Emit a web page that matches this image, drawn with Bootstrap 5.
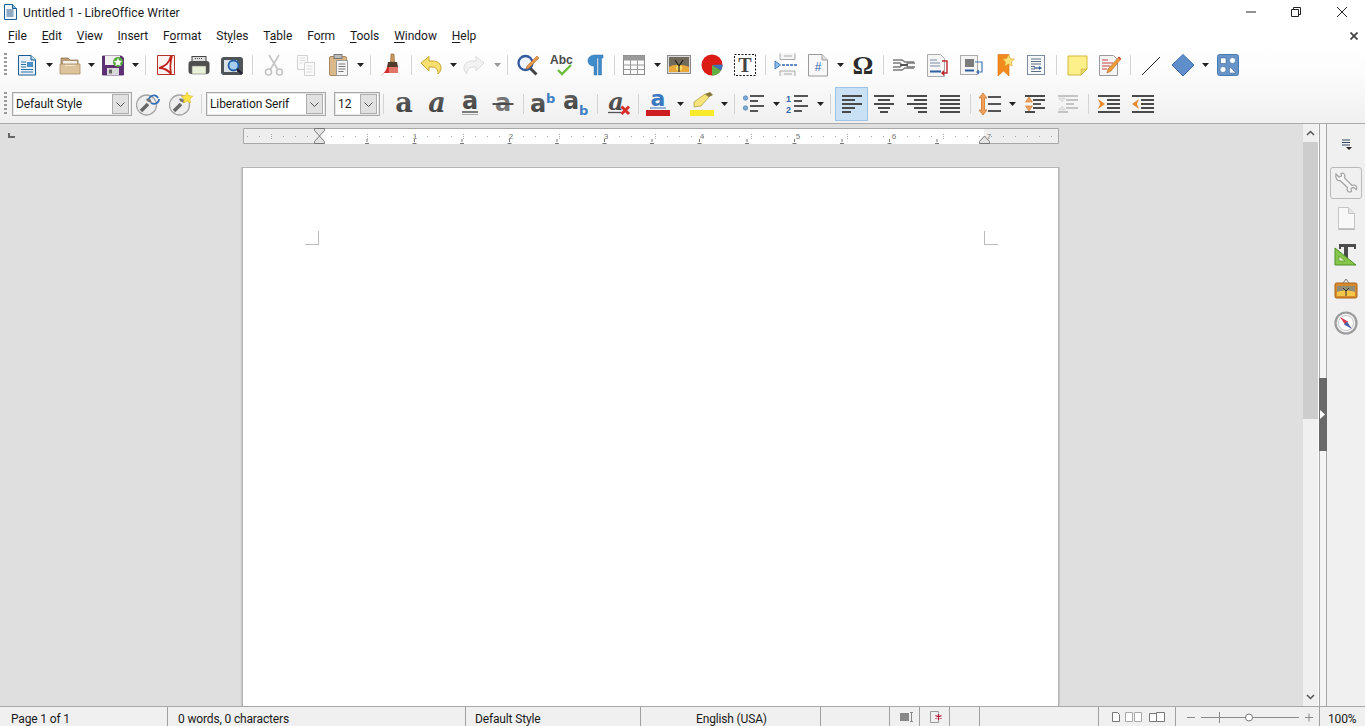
<!DOCTYPE html>
<html lang="en"><head><meta charset="utf-8"><title>Untitled 1 - LibreOffice Writer</title>
<link rel="stylesheet" href="https://cdn.jsdelivr.net/npm/bootstrap@5.3.0/dist/css/bootstrap.min.css">
<style>
html,body{height:726px;overflow:hidden}
body{font:12px/16px Roboto,"Noto Sans",sans-serif;color:#1a1a1a;background:#fff}
.lo-app{height:726px}
.lo-title{height:24px;font-size:12px;padding-left:3px}
.lo-title span{letter-spacing:.1px;padding-top:1px}
.lo-title svg.doc{width:15px;height:16px;margin-right:5px}
.lo-win{width:45px;height:24px}
.lo-win svg{width:12px;height:12px}
.lo-win3{width:47px}
.lo-menu{height:22px;padding:1px 7px 0 8px}
.lo-menu span u{text-underline-offset:2px}
.lo-menu .mi{margin-right:14.8px}
.lo-bars{background:linear-gradient(#fff,#fbfbfb 40%,#f0f0f0);border-bottom:1px solid #ababab;height:78px}
.lo-tb1{height:39px;padding:0 0 1px 4px}
.lo-tb2{height:38px;padding-left:4px}
.lo-grip{width:3px;height:24px;background:repeating-linear-gradient(#9a9a9a 0 2px,transparent 2px 4px)}
.ic{width:24px;height:24px;flex:none;display:block}
.ar{width:7px;height:4px;flex:none;display:block}
.sp{width:1px;height:20px;background:#d4d4d4;flex:none}
.cmb{height:24px;background:#fff;border:1px solid #a8a8a8;padding:1px 2px 1px 3px;flex:none;outline:1px solid #e6e6e6;outline-offset:-2px;letter-spacing:-.1px}
.cmb-s{width:120px}.cmb-f{width:120px}.cmb-n{width:46px}
.cmb b{width:17px;height:20px;background:#e1e1e1;border:1px solid #adadad;font-weight:400}
.cmb b svg{width:9px;height:5px}
.on{width:33px;height:34px;background:#c9e0f5;border:1px solid #9cc4e6;flex:none}
.gp2{margin-left:2px}.gp3{margin-left:3px}.gp4{margin-left:4px}.gp5{margin-left:5px}.gp6{margin-left:6px}.gp7{margin-left:7px}.gp8{margin-left:8px}.gp9{margin-left:9px}.gp10{margin-left:10px}
.lo-work{flex:1 1 0;min-height:0}
.lo-doc{background:#dfdfdf;padding:4px 0 0 243px;position:relative;overflow:hidden}
.lo-tabk{position:absolute;left:8px;top:9px;width:7px;height:5px;border-left:2px solid #666;border-bottom:2px solid #666}
.lo-ruler{width:816px;height:16px;display:block}
.lo-ruler text{font:8px "Liberation Sans",sans-serif;fill:#777}
.lo-page{width:817px;height:600px;margin:23px 0 0 -1px;background:#fff;border:1px solid #b4b4b4;box-shadow:-1px 0 1px #c8c8c8,1px 0 1px #c8c8c8,0 -1px 0 #efefef;position:relative}
.lo-crn{position:absolute;top:63px;width:14px;height:14px;border-bottom:1px solid #bbb}
.lo-crn-l{left:62px;border-right:1px solid #bbb}
.lo-crn-r{left:741px;border-left:1px solid #bbb}
.lo-scroll{width:16px;background:#f0f0f0;border-right:1px solid #fff}
.lo-scroll .btn-a{height:18px}
.lo-scroll svg{width:9px;height:6px}
.lo-thumb{height:277px;background:#cdcdcd}
.lo-split{width:8px;background:#f4f4f4;border-left:1px solid #a6a6a6;border-right:1px solid #a6a6a6;padding-top:254px}
.lo-split div{height:73px;background:#696969;margin:0 -1px}
.lo-split svg{width:5px;height:9px;margin-left:1px}
.lo-side{width:38px;background:#f0f0f0;padding-top:14px}
.lo-side .s1{width:12px;height:12px;margin-bottom:17px}
.lo-set{width:32px;height:32px;border:1px solid #b9b9b9;border-radius:3px;margin-bottom:7px;margin-left:-1px}
.sb13{margin-bottom:13px}.sb9{margin-bottom:9px}.sb11{margin-bottom:11px}
.lo-status{height:20px;background:#f0f0f0;border-top:1px solid #a8a8a8;font-size:12px;letter-spacing:-.15px}
.lo-status>div{height:19px;border-right:1px solid #a0a0a0;flex:none;padding-top:4px}
.st1{width:168px;padding-left:11px}.st2{width:298px;padding-left:10px}.st3{width:175px;padding-left:9px}.st4{width:180px;padding-left:55px}
.st5{width:69px}.st6{width:30px;padding-left:3px}.st7{width:30px;padding-left:3px}.st7b{width:30px}.st8{width:119px}.st9{width:77px}.st10{width:144px}.st11{padding-left:8px;border:0!important}
.lo-status svg{display:block}
.lo-vw{padding-top:0!important;padding-left:13px}
.lo-vw svg{height:12px;width:54px;margin-top:4px}
.lo-zm{padding-top:2px!important}
.lo-zm svg{width:144px;height:17px}
</style></head><body>
<svg width="0" height="0" class="position-absolute" aria-hidden="true"><defs>
<linearGradient id="gy" x1="0" y1="0" x2="0" y2="1"><stop offset="0" stop-color="#6a6a6a"/><stop offset="1" stop-color="#3c3c3c"/></linearGradient>
<symbol id="new" viewBox="0 0 24 24"><path d="M3.500 2.500H16l4.500 4.500v15h-17z" fill="#e8f1f9" stroke="#1c5d92"/><path d="M16 2.500V7h4.500" fill="#bcd6ea" stroke="#1c5d92"/><path d="M6 9h5M6 11.500h5M6 14h5M6 16.500h12M6 19h12" stroke="#2a74ad" stroke-width="1.200"/><rect x="12" y="9" width="6" height="5" fill="#4b8fc4"/></symbol>
<symbol id="open" viewBox="0 0 24 24"><path d="M3 5h7l2 2h8v4H3z" fill="#b89d77" stroke="#8f7755" stroke-width=".8"/><rect x="5" y="8" width="14" height="4" fill="#f4f0e6"/><path d="M2 11h20v10H2z" fill="#dcc39b" stroke="#a88e67" stroke-width=".8"/><path d="M7 12.500h10" stroke="#f1e3c9"/></symbol>
<symbol id="save" viewBox="0 0 24 24"><path d="M1.500 3h19l2 2v17h-21z" fill="#5f2f76" stroke="#46225a" stroke-width=".8"/><rect x="4" y="3" width="15" height="9" fill="#f1f1f1"/><rect x="6" y="15" width="12" height="7" fill="#d8d8d8"/><rect x="8" y="16.500" width="3" height="4" fill="#666"/><circle cx="17" cy="9" r="5" fill="#5aa840"/><path d="m17 5 1.200 2.700 3 .3-2.200 2 .6 2.900-2.600-1.500-2.600 1.500.6-2.900-2.200-2 3-.3z" fill="#fff"/></symbol>
<symbol id="pdf" viewBox="0 0 24 24"><path d="M3.500 2.500h17v19h-17z" fill="#f9f3f1" stroke="#b4332c"/><path d="M17 3C15 10 12 13 5 15c5 0 9 2 12 6-1-6-1-12 1-18" fill="#fff" stroke="#c4231c" stroke-width="1.800"/></symbol>
<symbol id="print" viewBox="0 0 24 24"><rect x="5" y="3.500" width="14" height="5" fill="#dedede" stroke="#444"/><path d="M1.500 11c0-2 1-3 3-3h15c2 0 3 1 3 3v7c0 2-1 3-3 3h-15c-2 0-3-1-3-3z" fill="#4e4e4e"/><rect x="5" y="13" width="14" height="8" fill="#e8f0d8" stroke="#777" stroke-width=".6"/><path d="M8 5.500h1m1 0h1m1 0h1m1 0h1" stroke="#555"/></symbol>
<symbol id="prev" viewBox="0 0 24 24"><path d="M1 7c0-2 1-3 3-3h16c2 0 3 1 3 3v12c0 2-1 3-3 3H4c-2 0-3-1-3-3z" fill="#4f5458"/><rect x="4" y="7" width="13" height="12" fill="#dce3e8"/><circle cx="13.500" cy="12.500" r="5" fill="#a5cdf0" stroke="#2660a4" stroke-width="1.800"/><path d="m17 16 5 5" stroke="#223" stroke-width="2.400"/></symbol>
<symbol id="cut" viewBox="0 0 24 24"><g fill="none" stroke="#c4c4c4" stroke-width="1.600"><path d="M7 2l9 15M17 2 8 17"/><circle cx="6.500" cy="19" r="3"/><circle cx="17.500" cy="19" r="3"/></g></symbol>
<symbol id="copy" viewBox="0 0 24 24"><g fill="#fbfbfb" stroke="#d2d2d2"><path d="M3.500 2.500h10v14h-10z"/><path d="M10.500 9.500h10v13h-10z"/></g><path d="M5.500 5h6M5.500 7.500h6M5.500 10h3M12.500 13h6M12.500 16h6M12.500 19h6" stroke="#dadada"/></symbol>
<symbol id="paste" viewBox="0 0 24 24"><rect x="2.500" y="3.500" width="17" height="19" rx="1.500" fill="#dcb98a" stroke="#a9855b"/><rect x="7" y="1.500" width="8" height="4" fill="#bcbcbc" stroke="#777"/><path d="M9.500 7.500h11v15h-11z" fill="#f6f6f6" stroke="#999"/><path d="M11.500 11h7M11.500 13.500h7M11.500 16h7M11.500 18.500h5" stroke="#777"/></symbol>
<symbol id="clone" viewBox="0 0 24 24"><path d="M11 1h3l.5 8h-4z" fill="#c9985d" stroke="#8a6436" stroke-width=".6"/><path d="M8 9h9l1 5H7z" fill="#4f3a2b"/><path d="M7 14h11v6H4l-3 3c2-3 5-4 6-9z" fill="#d62f2b"/><path d="M9 14h9v6H9z" fill="#f0e2c6" fill-opacity=".4"/></symbol>
<symbol id="undo" viewBox="0 0 24 24"><path d="M2 10 10 3.500V8h4c5 0 8 3 8 7 0 2-1 4-3 6 .5-4-2-7-6-7h-3v4z" fill="#f8df70" stroke="#c9a62a"/></symbol>
<symbol id="redo" viewBox="0 0 24 24"><path d="M22 10 14 3.500V8h-4c-5 0-8 3-8 7 0 2 1 4 3 6-.5-4 2-7 6-7h3v4z" fill="#f2f2f2" stroke="#dcdcdc"/></symbol>
<symbol id="find" viewBox="0 0 24 24"><circle cx="9.500" cy="10" r="7" fill="#eef4fb" stroke="#33599e" stroke-width="2.300"/><path d="m14.500 15.500 6 6" stroke="#444" stroke-width="3"/><path d="M21 3l2 2-10 10-3 1 1-3z" fill="#e9974a" stroke="#a9682c" stroke-width=".6"/></symbol>
<symbol id="spell" viewBox="0 0 24 24"><text x="0" y="11" font-family="Liberation Sans" font-weight="700" font-size="12" fill="#4a4a4a">Abc</text><path d="m8 17 4 4 9-9" fill="none" stroke="#6abf3a" stroke-width="2.400"/></symbol>
<symbol id="pil" viewBox="0 0 24 24"><path d="M13 2h7v3h-1.500v17h-3V5H14v17h-3V13c-4 0-6-2-6-5.500S8 2 13 2z" fill="#3f8ccb" stroke="#2d6fa8" stroke-width=".5"/></symbol>
<symbol id="table" viewBox="0 0 24 24"><rect x="1.500" y="2.500" width="21" height="19" fill="#fbfbfb" stroke="#8a8a8a"/><rect x="1.500" y="2.500" width="21" height="5" fill="#9a9a9a"/><path d="M1.500 12h21M1.500 16.500h21M8.500 2.500v19M15.500 2.500v19" stroke="#9a9a9a"/></symbol>
<symbol id="img" viewBox="0 0 24 24"><rect x=".5" y="2.500" width="23" height="18" fill="#d9d9d9" stroke="#8a8a8a"/><rect x="2" y="4" width="20" height="15" fill="#6f6a5c"/><path d="M2 14c4-3 14-3 20 0v5H2z" fill="#e8a93a"/><circle cx="12" cy="15" r="3" fill="#f8dc6a"/><path d="M12 19v-6L8 7m4 6 4-6" stroke="#2b2012" stroke-width="1.200" fill="none"/></symbol>
<symbol id="chart" viewBox="0 0 24 24"><circle cx="12" cy="12" r="10.500" fill="#dc1c14"/><path d="M12 12 21 17.500a10.500 10.500 0 0 1-9 5z" fill="#62b043"/><path d="M12 12 22.500 11.500a10.500 10.500 0 0 1-1.500 6z" fill="#3e73ba"/></symbol>
<symbol id="tbox" viewBox="0 0 24 24"><rect x="1.500" y="1.500" width="21" height="21" fill="#fff" stroke="#111" stroke-dasharray="2 1.500"/><text x="12" y="18.500" text-anchor="middle" font-family="Liberation Serif" font-weight="700" font-size="20" fill="#444">T</text></symbol>
<symbol id="brk" viewBox="0 0 24 24"><path d="M6 .5v6h15v-6" fill="#f4f4f4" stroke="#aaa"/><path d="M6 23v-5h15v5" fill="#f4f4f4" stroke="#aaa"/><path d="M10 3h8M10 21h8" stroke="#aaa"/><path d="M8 12h15" stroke="#2f66ad" stroke-width="1.600" stroke-dasharray="3 1"/><path d="M1 8l5.500 4L1 16z" fill="#8cc0ec" stroke="#2f66ad" stroke-width=".8"/></symbol>
<symbol id="fld" viewBox="0 0 24 24"><path d="M2.500 1.500H16L21.500 7v16h-19z" fill="#f8f8f8" stroke="#9a9a9a"/><path d="M16 1.500V7h5.500" fill="#e2e2e2" stroke="#9a9a9a"/><text x="12" y="18" text-anchor="middle" font-family="Liberation Sans" font-size="12" fill="#2f66ad">#</text></symbol>
<symbol id="omg" viewBox="0 0 24 24"><text x="12" y="21" text-anchor="middle" font-family="Liberation Serif" font-weight="700" font-size="26" fill="#2b2b2b">Ω</text></symbol>
<symbol id="lnk" viewBox="0 0 24 24"><g fill="none" stroke="#7a7a7a" stroke-width="1.300"><path d="M1 7h9l3 2h9M1 17h9l3-2h9"/><path d="M1 10h7l2 2-2 2H1M23 10h-7l-2 2 2 2h7"/><path d="M8 12h8" stroke="#555" stroke-width="2"/></g></symbol>
<symbol id="foot" viewBox="0 0 24 24"><path d="M2.500 1.500h13l4 4v18h-17z" fill="#f6f6f6" stroke="#aaa"/><path d="M5 7h7M5 10h10M5 13h10" stroke="#7a8ba5"/><rect x="5" y="17.500" width="11" height="2" fill="#2f5f9f"/><path d="M17 8h5v12h-4" fill="none" stroke="#c0272d" stroke-width="1.400"/><path d="m19 17-3 3 3 3z" fill="#c0272d"/></symbol>
<symbol id="endn" viewBox="0 0 24 24"><rect x="1.500" y="2.500" width="17" height="19" fill="#f4f4f4" stroke="#aaa"/><rect x="6" y="6" width="9" height="8" fill="#7b7b7b"/><rect x="6" y="16.500" width="9" height="2" fill="#2f5f9f"/><path d="M16 9h7v10h-3" fill="none" stroke="#4176b8" stroke-width="1.200"/><path d="m20 16.500-3 2.500 3 2.500z" fill="#4176b8"/></symbol>
<symbol id="bmk" viewBox="0 0 24 24"><path d="M5 1.500h11V23l-5.500-5L5 23z" fill="#f28a1e" stroke="#d46f0c" stroke-width=".6"/><path d="m15.500 2 1.800 3.600 4 .6-2.900 2.800.7 4-3.600-1.900-3.600 1.900.7-4-2.900-2.800 4-.6z" fill="#fde27a" stroke="#e2a92c" stroke-width=".7"/></symbol>
<symbol id="xref" viewBox="0 0 24 24"><rect x="3.500" y="2.500" width="17" height="19" fill="#f6f8fa" stroke="#7d8b9c"/><path d="M7 6h10M7 8.500h10M7 11h10M7 13.500h4M7 16h4M7 18.500h10" stroke="#5f6f82"/><path d="M10 15h6" stroke="#2d5d96" stroke-width="1.300"/><path d="m15 13 3 2-3 2z" fill="#2d5d96"/></symbol>
<symbol id="note" viewBox="0 0 24 24"><path d="M3 3h19v13l-6 6H3z" fill="#fdf08a" stroke="#d2b93c"/><path d="M16 22v-6h6z" fill="#e8d868" stroke="#c7ae36" stroke-width=".6"/></symbol>
<symbol id="trk" viewBox="0 0 24 24"><path d="M1.500 2.500h14l4 4v16h-18z" fill="#f4f4f4" stroke="#9a9a9a"/><path d="M4 7h6M4 10h11M4 13h8M4 16h5" stroke="#c9433e"/><path d="M21 4l2 2-10 12-4 2 1-4z" fill="#ee9b3a" stroke="#aa6720" stroke-width=".6"/><path d="m20 4.500 1-1 2 2-1 1.200z" fill="#d7423b"/></symbol>
<symbol id="line" viewBox="0 0 24 24"><path d="M3 22 21 4" stroke="#222" stroke-width="1"/></symbol>
<symbol id="dia" viewBox="0 0 24 24"><path d="M12 1.500 23 12 12 23 1 12z" fill="#5e8fcb" stroke="#3c6ba6"/></symbol>
<symbol id="draw" viewBox="0 0 24 24"><rect x="1.500" y="1.500" width="21" height="21" rx="2" fill="#6795c9" stroke="#497bb3"/><g fill="#fff" stroke="#2c5688" stroke-width=".5"><rect x="4.500" y="5" width="5.500" height="5.500"/><circle cx="16.500" cy="7.500" r="3"/><circle cx="7" cy="16.500" r="3"/><path d="M13.500 13.500v6.500h6.500z"/></g></symbol>
<symbol id="upd" viewBox="0 0 24 24"><circle cx="10.500" cy="13" r="10" fill="#eee" stroke="#a5a5a5" stroke-width="1.300"/><path d="m5 19 7-7" stroke="#666" stroke-width="3.500"/><path d="M10 7c3-1.500 6 .5 5.500 4l-3-1-1.500-1z" fill="#777"/><path d="M13 7c1-4 7-5 9-1M23 7c0 4-4 6-8 4" fill="none" stroke="#2f70b8" stroke-width="1.700"/></symbol>
<symbol id="nws" viewBox="0 0 24 24"><circle cx="10.500" cy="13" r="10" fill="#eee" stroke="#a5a5a5" stroke-width="1.300"/><path d="m5 19 7-7" stroke="#666" stroke-width="3.500"/><path d="M10 7c3-1.500 6 .5 5.500 4l-3-1-1.500-1z" fill="#777"/><path d="m18 0 1.800 3.600 4 .6-2.900 2.800.7 4-3.600-1.900-3.600 1.900.7-4-2.900-2.800 4-.6z" fill="#fde345" stroke="#d3b21c" stroke-width=".5"/></symbol>
<symbol id="b" viewBox="0 0 24 24"><text x="12" y="19.500" text-anchor="middle" font-family="DejaVu Serif" font-weight="700" font-size="27" fill="url(#gy)">a</text></symbol>
<symbol id="i" viewBox="0 0 24 24"><text x="12" y="19.500" text-anchor="middle" font-family="DejaVu Serif" font-style="italic" font-weight="700" font-size="27" fill="url(#gy)">a</text></symbol>
<symbol id="u" viewBox="0 0 24 24"><text x="12" y="17" text-anchor="middle" font-family="DejaVu Sans" font-weight="700" font-size="24" fill="url(#gy)">a</text><path d="M4 20h16" stroke="#555" stroke-width="1.500"/><path d="M4 22.500h16" stroke="#aaa" stroke-width="1"/></symbol>
<symbol id="s" viewBox="0 0 24 24"><text x="12" y="19" text-anchor="middle" font-family="DejaVu Sans" font-weight="700" font-size="24" fill="#777">a</text><path d="M1.500 12h21" stroke="#444" stroke-width="1.800"/></symbol>
<symbol id="sup" viewBox="0 0 24 24"><text x="-1" y="20" font-family="DejaVu Sans" font-weight="700" font-size="24" fill="url(#gy)">a</text><text x="15" y="11" font-family="DejaVu Sans" font-weight="700" font-size="13" fill="#3d7fc4">b</text></symbol>
<symbol id="sub" viewBox="0 0 24 24"><text x="-1" y="17" font-family="DejaVu Sans" font-weight="700" font-size="24" fill="url(#gy)">a</text><text x="15" y="23" font-family="DejaVu Sans" font-weight="700" font-size="13" fill="#3d7fc4">b</text></symbol>
<symbol id="clr" viewBox="0 0 24 24"><text x="9" y="18" text-anchor="middle" font-family="DejaVu Serif" font-style="italic" font-weight="700" font-size="24" fill="url(#gy)">a</text><path d="M1 20.500h13" stroke="#555" stroke-width="1.300"/><path d="m14.500 14.500 7.500 7.500m0-7.500-7.500 7.500" stroke="#d62f2b" stroke-width="3"/></symbol>
<symbol id="fc" viewBox="0 0 24 24"><text x="12" y="14" text-anchor="middle" font-family="DejaVu Sans" font-weight="700" font-size="22" fill="#3a79bf">a</text><path d="M4 16h16" stroke="#3a79bf" stroke-width="1"/><rect y="18" width="24" height="6" fill="#cc1e20"/></symbol>
<symbol id="hl" viewBox="0 0 24 24"><path d="M4 10 15 2l4 3-8 9-7 1z" fill="#f8e37a" stroke="#a89a3a" stroke-width=".7"/><path d="m15 2 5-2 3 3-4 2z" fill="#8a7a3a"/><rect y="18" width="24" height="6" fill="#f9e92b"/></symbol>
<symbol id="bul" viewBox="0 0 24 24"><circle cx="3.500" cy="6" r="2.200" fill="#7faad6" stroke="#3f6f9f" stroke-width=".6"/><circle cx="3.500" cy="16" r="2.200" fill="#7faad6" stroke="#3f6f9f" stroke-width=".6"/><path d="M8 4h14M8 9h8M8 14h14M8 19h8" stroke="#555" stroke-width="2"/></symbol>
<symbol id="num" viewBox="0 0 24 24"><text x="0" y="10" font-family="Liberation Sans" font-weight="700" font-size="9" fill="#2f66ad">1</text><text x="0" y="21" font-family="Liberation Sans" font-weight="700" font-size="9" fill="#2f66ad">2</text><path d="M8 4h14M8 9h8M8 14h14M8 19h8" stroke="#555" stroke-width="2"/></symbol>
<symbol id="al" viewBox="0 0 24 24"><path d="M2 4h20M2 8h13M2 12h20M2 16h13M2 20h9" stroke="#4a4a4a" stroke-width="1.800"/></symbol>
<symbol id="ac" viewBox="0 0 24 24"><path d="M2 4h20M6 8h12M2 12h20M6 16h12M8 20h8" stroke="#4a4a4a" stroke-width="1.800"/></symbol>
<symbol id="ar" viewBox="0 0 24 24"><path d="M2 4h20M9 8h13M2 12h20M9 16h13M13 20h9" stroke="#4a4a4a" stroke-width="1.800"/></symbol>
<symbol id="aj" viewBox="0 0 24 24"><path d="M2 4h20M2 8h20M2 12h20M2 16h20M2 20h20" stroke="#4a4a4a" stroke-width="1.800"/></symbol>
<symbol id="spc" viewBox="0 0 24 24"><path d="M5 1 1 6h2.500v12H1l4 5 4-5H6.500V6H9z" fill="#f0a05a" stroke="#d17a2c" stroke-width=".8"/><path d="M10 5h13M10 12h13M10 19h13" stroke="#555" stroke-width="2.200"/></symbol>
<symbol id="inc" viewBox="0 0 24 24"><path d="M2 4h20M10 8h12M10 16h12M2 20h10" stroke="#4a4a4a" stroke-width="1.800"/><path d="m6 5-3.500 5h7zM6 19l-3.500-5h7z" fill="#f0a05a" stroke="#c97728" stroke-width=".6"/><path d="M10 12h8" stroke="#4a4a4a" stroke-width="1.800"/></symbol>
<symbol id="dec" viewBox="0 0 24 24"><path d="M2 4h20M10 8h12M10 16h12M2 20h10M10 12h8" stroke="#c4c4c4" stroke-width="1.800"/><path d="m6 10-3.500-4h7zM6 14l-3.500 4h7z" fill="#e4e4e4" stroke="#cfcfcf" stroke-width=".6"/></symbol>
<symbol id="ind" viewBox="0 0 24 24"><path d="M1 4h22M10 8h13M10 12h13M10 16h13M1 20h22" stroke="#4a4a4a" stroke-width="1.800"/><path d="M1 7l7 5-7 5 2-5z" fill="#e98b2e"/></symbol>
<symbol id="oud" viewBox="0 0 24 24"><path d="M1 4h22M10 8h13M10 12h13M10 16h13M1 20h22" stroke="#4a4a4a" stroke-width="1.800"/><path d="M8 7l-7 5 7 5-2-5z" fill="#e98b2e"/></symbol>
<symbol id="a" viewBox="0 0 7 4"><path d="M0 0h7L3.500 4z" fill="#222"/></symbol>
<symbol id="ag" viewBox="0 0 7 4"><path d="M0 0h7L3.500 4z" fill="#999"/></symbol>
<symbol id="chv" viewBox="0 0 9 5"><path d="M.5 .5l4 4 4-4" fill="none" stroke="#555"/></symbol>
<symbol id="wr" viewBox="0 0 24 24"><g fill="#f6f6f6" stroke="#a2a2a2" stroke-width="1.200"><path d="M2 3l3 3 2.500-1L7 2.500C9.500 1 12 4 10.500 7L18 14.500c3-1.500 5.500 1 4.500 4l-3-2-2.500 1 .5 3c-2.500 1.500-5.500-1-4-4L6 9.500C3.500 10.500 1 7 2 3z"/></g></symbol>
<symbol id="pg" viewBox="0 0 24 24"><path d="M4.500 1.500h10l6 6v15h-16z" fill="#f8f8f8" stroke="#c4c4c4"/><path d="M14.500 1.500v6h6" fill="#e6e6e6" stroke="#c4c4c4"/><path d="M4 23.500h17" stroke="#bbb"/></symbol>
<symbol id="st" viewBox="0 0 24 24"><path d="M5 1h17v5h-2V4h-6v16h-4V4H7v2H5z" fill="#4c4c4c"/><path d="M1 5 22 22H1z" fill="#87c64c" stroke="#4c8f25"/><path d="M5 13l6 5H5z" fill="#dff0c8" stroke="#4c8f25" stroke-width=".6"/></symbol>
<symbol id="gal" viewBox="0 0 24 24"><path d="M9 7l3-4 3 4" fill="none" stroke="#777"/><rect x="1" y="7" width="22" height="15" rx="1.500" fill="#d98a2a" stroke="#a8651a"/><rect x="3" y="10" width="18" height="10" fill="#8f8d78"/><path d="M3 16c5-2 13-2 18 0v4H3z" fill="#f5c648"/><path d="M12 20v-5L9 12m3 3 3-3" stroke="#333" fill="none"/></symbol>
<symbol id="cmp" viewBox="0 0 24 24"><circle cx="12" cy="12" r="10.500" fill="#f2f2f2" stroke="#9a9a9a" stroke-width="2.200"/><circle cx="12" cy="12" r="7.500" fill="#fff" stroke="#c8c8c8"/><path d="M6 6l8 4.500-3 3z" fill="#d9394a"/><path d="M18 18l-8-4.500 3-3z" fill="#4a5fa8"/></symbol>
</defs></svg>

<div class="lo-app d-flex flex-column">
<div class="lo-title d-flex align-items-center flex-shrink-0">
<svg class="doc" viewBox="0 0 15 16" aria-hidden="true"><path d="M1.500 .5h8l4 4v11h-12z" fill="#f2f7fb" stroke="#1c5d92"/><path d="M9.500 .5v4h4" fill="#8fbfe0" stroke="#1c5d92"/><path d="M3.500 6h7M3.500 8h7M3.500 10h7M3.500 12h7" stroke="#2f5f88"/></svg>
<span>Untitled 1 - LibreOffice Writer</span>
<div class="ms-auto d-flex">
<div class="lo-win d-flex align-items-center justify-content-center"><svg viewBox="0 0 12 12"><path d="M1 6h10" stroke="#222"/></svg></div>
<div class="lo-win d-flex align-items-center justify-content-center"><svg viewBox="0 0 12 12"><path d="M1.500 3.500h7v7h-7zM3.500 3.500v-2h7v7h-2" fill="none" stroke="#222"/></svg></div>
<div class="lo-win lo-win3 d-flex align-items-center justify-content-center"><svg viewBox="0 0 12 12"><path d="M1 1l10 10M11 1 1 11" stroke="#222"/></svg></div>
</div></div>
<div class="lo-menu d-flex align-items-center flex-shrink-0">
<span class="mi"><u>F</u>ile</span><span class="mi"><u>E</u>dit</span><span class="mi"><u>V</u>iew</span><span class="mi"><u>I</u>nsert</span><span class="mi">F<u>o</u>rmat</span><span class="mi">St<u>y</u>les</span><span class="mi">T<u>a</u>ble</span><span class="mi">Fo<u>r</u>m</span><span class="mi"><u>T</u>ools</span><span class="mi"><u>W</u>indow</span><span class="mi"><u>H</u>elp</span>
<svg class="ms-auto" width="8" height="8" viewBox="0 0 8 8"><path d="M.5 .5l7 7m0-7-7 7" stroke="#444" stroke-width="1.800"/></svg>
</div>
<div class="lo-bars flex-shrink-0">
<div class="lo-tb1 d-flex align-items-center">
<div class="lo-grip"></div>
<svg class="ic gp8"><use href="#new"/></svg><svg class="ar gp7"><use href="#a"/></svg>
<svg class="ic gp5"><use href="#open"/></svg><svg class="ar gp6"><use href="#a"/></svg>
<svg class="ic gp6"><use href="#save"/></svg><svg class="ar gp7"><use href="#a"/></svg>
<div class="sp gp6"></div>
<svg class="ic gp8"><use href="#pdf"/></svg><svg class="ic gp9"><use href="#print"/></svg><svg class="ic gp9"><use href="#prev"/></svg>
<div class="sp gp8"></div>
<svg class="ic gp9"><use href="#cut"/></svg><svg class="ic gp8"><use href="#copy"/></svg><svg class="ic gp9"><use href="#paste"/></svg><svg class="ar gp6"><use href="#a"/></svg>
<div class="sp gp6"></div>
<svg class="ic gp9"><use href="#clone"/></svg>
<div class="sp gp7"></div>
<svg class="ic gp7"><use href="#undo"/></svg><svg class="ar gp7"><use href="#a"/></svg>
<svg class="ic gp5"><use href="#redo"/></svg><svg class="ar gp8"><use href="#ag"/></svg>
<div class="sp gp6"></div>
<svg class="ic gp8"><use href="#find"/></svg><svg class="ic gp10"><use href="#spell"/></svg><svg class="ic gp9"><use href="#pil"/></svg>
<div class="sp gp7"></div>
<svg class="ic gp7"><use href="#table"/></svg><svg class="ar gp8"><use href="#a"/></svg>
<svg class="ic gp6"><use href="#img"/></svg><svg class="ic gp9"><use href="#chart"/></svg><svg class="ic gp9"><use href="#tbox"/></svg>
<div class="sp gp8"></div>
<svg class="ic gp8"><use href="#brk"/></svg><svg class="ic gp8"><use href="#fld"/></svg><svg class="ar gp7"><use href="#a"/></svg>
<svg class="ic gp7"><use href="#omg"/></svg>
<div class="sp gp8"></div>
<svg class="ic gp8"><use href="#lnk"/></svg><svg class="ic gp9"><use href="#foot"/></svg><svg class="ic gp10"><use href="#endn"/></svg><svg class="ic gp10"><use href="#bmk"/></svg><svg class="ic gp7"><use href="#xref"/></svg>
<div class="sp gp8"></div>
<svg class="ic gp8"><use href="#note"/></svg><svg class="ic gp9"><use href="#trk"/></svg>
<div class="sp gp8"></div>
<svg class="ic gp8"><use href="#line"/></svg><svg class="ic gp8"><use href="#dia"/></svg><svg class="ar gp7"><use href="#a"/></svg><svg class="ic gp7"><use href="#draw"/></svg>
</div>
<div class="lo-tb2 d-flex align-items-center">
<div class="lo-grip"></div>
<div class="cmb cmb-s gp5 d-flex align-items-center justify-content-between"><span>Default Style</span><b class="d-flex align-items-center justify-content-center"><svg><use href="#chv"/></svg></b></div>
<svg class="ic gp4"><use href="#upd"/></svg><svg class="ic gp9"><use href="#nws"/></svg>
<div class="sp gp8"></div>
<div class="cmb cmb-f gp4 d-flex align-items-center justify-content-between"><span>Liberation Serif</span><b class="d-flex align-items-center justify-content-center"><svg><use href="#chv"/></svg></b></div>
<div class="cmb cmb-n gp8 d-flex align-items-center justify-content-between"><span>12</span><b class="d-flex align-items-center justify-content-center"><svg><use href="#chv"/></svg></b></div>
<div class="sp gp3"></div>
<svg class="ic gp8"><use href="#b"/></svg><svg class="ic gp9"><use href="#i"/></svg><svg class="ic gp9"><use href="#u"/></svg><svg class="ic gp9"><use href="#s"/></svg>
<div class="sp gp8"></div>
<svg class="ic gp7"><use href="#sup"/></svg><svg class="ic gp9"><use href="#sub"/></svg>
<div class="sp gp9"></div>
<svg class="ic gp9"><use href="#clr"/></svg>
<div class="sp gp7"></div>
<svg class="ic gp7"><use href="#fc"/></svg><svg class="ar gp7"><use href="#a"/></svg>
<svg class="ic gp6"><use href="#hl"/></svg><svg class="ar gp7"><use href="#a"/></svg>
<div class="sp gp6"></div>
<svg class="ic gp7"><use href="#bul"/></svg><svg class="ar gp7"><use href="#a"/></svg>
<svg class="ic gp6"><use href="#num"/></svg><svg class="ar gp7"><use href="#a"/></svg>
<div class="sp gp6"></div>
<div class="on gp4 d-flex align-items-center justify-content-center"><svg class="ic"><use href="#al"/></svg></div>
<svg class="ic gp4"><use href="#ac"/></svg><svg class="ic gp9"><use href="#ar"/></svg><svg class="ic gp9"><use href="#aj"/></svg>
<div class="sp gp8"></div>
<svg class="ic gp7"><use href="#spc"/></svg><svg class="ar gp7"><use href="#a"/></svg>
<svg class="ic gp7"><use href="#inc"/></svg><svg class="ic gp9"><use href="#dec"/></svg>
<div class="sp gp8"></div>
<svg class="ic gp8"><use href="#ind"/></svg><svg class="ic gp10"><use href="#oud"/></svg>
</div>
</div>
<div class="lo-work d-flex">
<div class="lo-doc flex-grow-1">
<div class="lo-tabk"></div>
<svg class="lo-ruler" viewBox="0 0 816 16">
<rect width="816" height="16" fill="#fff"/>
<rect width="76" height="16" fill="#eeeeee"/><rect x="741" width="75" height="16" fill="#eeeeee"/>
<path d="M.5 15.500V.5H815.500V15.500H741M76 15.500H.5" fill="none" stroke="#a8a8a8"/>
<path d="M4 8.500H812" stroke="#a0a0a0" stroke-dasharray="1 11"/>
<path d="M28.500 6V11M124.500 6V11M220.500 6V11M316.500 6V11M412.500 6V11M508.500 6V11M604.500 6V11M700.500 6V11" stroke="#aaa" stroke-dasharray="1 1"/>
<path d="M124 14V11M171.500 14V11M219 14V11M266.500 14V11M314 14V11M361.500 14V11M409 14V11M456.500 14V11M504 14V11M551.500 14V11M599 14V11M646.500 14V11M694 14V11" stroke="#777"/>
<path d="M122 15.500H126M169.500 15.500H173.500M217 15.500H221M264.500 15.500H268.500M312 15.500H316M359.500 15.500H363.500M407 15.500H411M454.500 15.500H458.500M502 15.500H506M549.500 15.500H553.500M597 15.500H601M644.500 15.500H648.500M692 15.500H696" stroke="#777"/>
<text x="172" y="11" text-anchor="middle">1</text><text x="268" y="11" text-anchor="middle">2</text><text x="363" y="11" text-anchor="middle">3</text><text x="459" y="11" text-anchor="middle">4</text><text x="555" y="11" text-anchor="middle">5</text><text x="651" y="11" text-anchor="middle">6</text><text x="746" y="11" text-anchor="middle">7</text>
<path d="M71.500 .5h10v2L76.500 8l5 5.500v2h-10v-2L76.500 8l-5-5.500z" fill="#e4e4e4" stroke="#777"/>
<path d="M741.500 8l5 5.500v2h-10v-2z" fill="#e4e4e4" stroke="#777"/>
</svg>
<div class="lo-page"><div class="lo-crn lo-crn-l"></div><div class="lo-crn lo-crn-r"></div></div>
</div>
<div class="lo-scroll d-flex flex-column flex-shrink-0">
<div class="btn-a d-flex align-items-center justify-content-center"><svg viewBox="0 0 9 6"><path d="M1 5l3.500-3.500L8 5" fill="none" stroke="#555" stroke-width="1.500"/></svg></div>
<div class="lo-thumb"></div>
<div class="btn-a d-flex align-items-center justify-content-center mt-auto"><svg viewBox="0 0 9 6"><path d="M1 1l3.500 3.500L8 1" fill="none" stroke="#555" stroke-width="1.500"/></svg></div>
</div>
<div class="lo-split flex-shrink-0"><div class="d-flex align-items-center"><svg viewBox="0 0 5 9"><path d="M0 0l5 4.500L0 9z" fill="#fff"/></svg></div></div>
<div class="lo-side d-flex flex-column align-items-center flex-shrink-0">
<svg class="s1" viewBox="0 0 12 12"><path d="M2 2h8M2 4.500h8M2 7h8" stroke="#33495f" stroke-width="1.200"/><path d="M6 9h6l-3 3z" fill="#222"/></svg>
<div class="lo-set d-flex align-items-center justify-content-center"><svg class="ic"><use href="#wr"/></svg></div>
<svg class="ic sb13"><use href="#pg"/></svg>
<svg class="ic sb9"><use href="#st"/></svg>
<svg class="ic sb11"><use href="#gal"/></svg>
<svg class="ic"><use href="#cmp"/></svg>
</div>
</div>
<div class="lo-status d-flex flex-shrink-0">
<div class="st1">Page 1 of 1</div>
<div class="st2">0 words, 0 characters</div>
<div class="st3">Default Style</div>
<div class="st4">English (USA)</div>
<div class="st5"></div>
<div class="st6 d-flex justify-content-center"><svg width="13" height="12" viewBox="0 0 13 12"><rect y="2" width="9" height="8" fill="#888"/><path d="M10 1.500h3M11.500 1.500v9M10 10.500h3" stroke="#888"/></svg></div>
<div class="st7 d-flex justify-content-center"><svg width="13" height="12" viewBox="0 0 13 12"><path d="M.5 .5h8v2M8.500 9v2.500h-8v-11" fill="none" stroke="#999"/><path d="M8.500 3v6M5.500 4.500l6 3m0-3-6 3" stroke="#b01c3a" stroke-width="1.300"/></svg></div>
<div class="st7b"></div>
<div class="st8"></div>
<div class="st9 lo-vw"><svg viewBox="0 0 54 12"><g fill="#fff" stroke="#777"><path d="M.5 1.500h5l2 2v7h-7z"/><path d="M13.500 1.500h7v9h-7zM22.500 1.500h7v9h-7z" stroke="#aaa"/><path d="M37.500 2.500h7v8h-7zM44.500 1.500h8v9h-8z"/></g></svg></div>
<div class="st10 lo-zm"><svg viewBox="0 0 144 17"><path d="M11 8.500h8M25 8.500h98" stroke="#8a8a8a"/><path d="M129 8.500h8M133 4.500v8" stroke="#8a8a8a"/><path d="M43.500 3v11" stroke="#8a8a8a"/><circle cx="73" cy="8.500" r="3.500" fill="#fff" stroke="#777"/></svg></div>
<div class="st11">100%</div>
</div>
</div>
</body></html>
